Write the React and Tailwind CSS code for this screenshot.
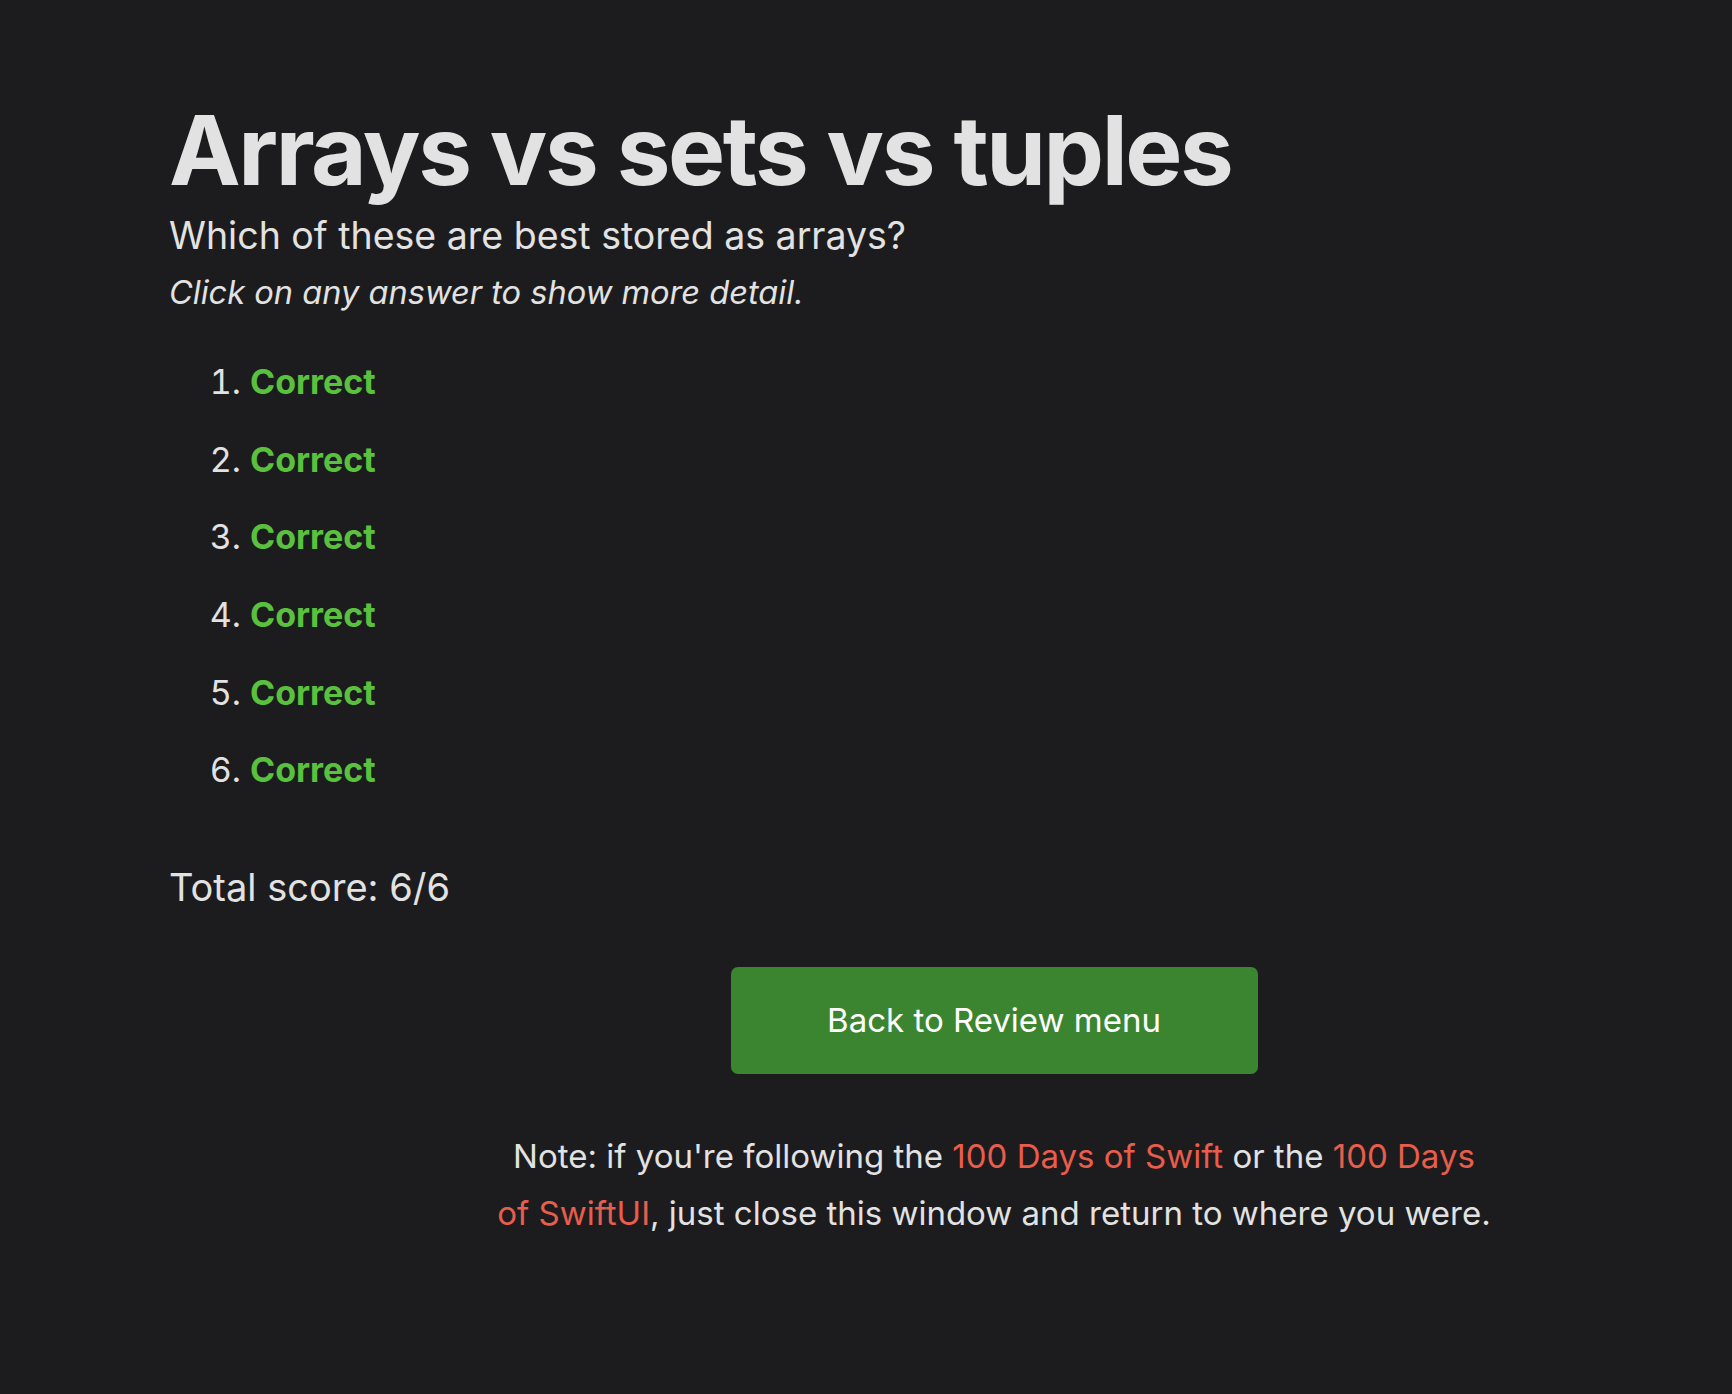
import React from "react";

const answers = [1, 2, 3, 4, 5, 6];

export default function App() {
  return (
    <div className="min-h-screen bg-[#1c1c1e] text-[#e2e2e2] font-['Inter',sans-serif]">
      <div className="pl-[169px] pt-[95px] pb-[160px]">
        {/* Header */}
        <h1 className="text-[96px] font-bold leading-[110px] tracking-[-0.025em]">
          Arrays vs sets vs tuples
        </h1>
        <p className="text-[37.5px] leading-[46px] mt-[8px]">Which of these are best stored as arrays?</p>
        <p className="text-[32.6px] leading-[46px] italic mt-[10px]">Click on any answer to show more detail.</p>

        {/* Answers */}
        <ol className="list-decimal pl-[81px] mt-[28px] text-[34px]">
          {answers.map((n) => (
            <li key={n} className="h-[77.7px] leading-[77.7px]">
              <span className="font-bold text-[#5ac13e]">Correct</span>
            </li>
          ))}
        </ol>

        <p className="text-[38px] leading-[46px] mt-[55px]">Total score: 6/6</p>

        {/* Back button + note */}
        <div className="w-[1000px] ml-[325px] mt-[57px] flex flex-col items-center">
          <button className="w-[527px] h-[107px] rounded-[7px] bg-[#3b8530] text-white text-[33px]">
            Back to Review menu
          </button>
          <p className="mt-[54px] text-center text-[33px] leading-[57px]">
            Note: if you're following the <a href="#" className="text-[#e85d4b]">100 Days of Swift</a> or the{" "}
            <a href="#" className="text-[#e85d4b]">100 Days of SwiftUI</a>, just close this window and return to where you were.
          </p>
        </div>
      </div>
    </div>
  );
}
